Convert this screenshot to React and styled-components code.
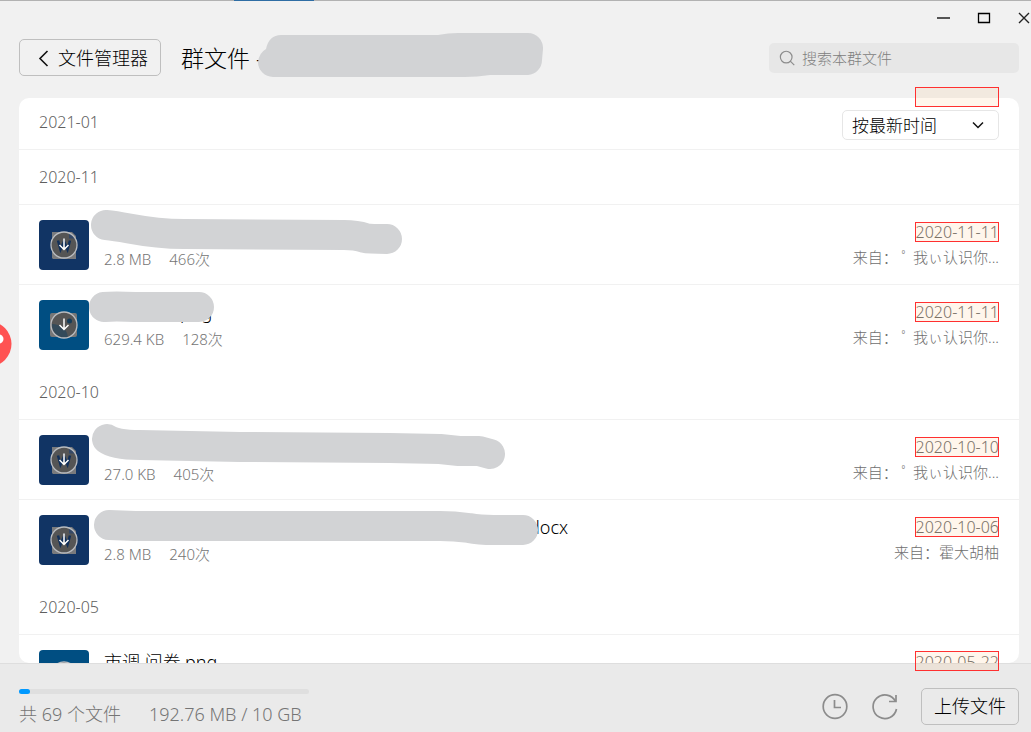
import React from "react";
import styled, { createGlobalStyle } from "styled-components";
import { useState } from "react";

const GlobalStyle = createGlobalStyle`
  * {
    box-sizing: border-box;
  }

  body {
    margin: 0;
    background: #f1f1f1;
    overflow: hidden;
  }

  body, button, input, select {
    font-family: "Noto Sans", "Noto Sans CJK SC", sans-serif;
    font-weight: 300;
  }

  h1, h2, p, ul {
    margin: 0;
    padding: 0;
    font-weight: inherit;
    list-style: none;
  }
`;

const Whole = styled.main`
  height: 100vh;
  position: relative;
  overflow: hidden;

  display: flex;
  flex-direction: column;

  background: #f1f1f1;
`;

const TopEdge = styled.div`
  height: 1px;
  padding-left: 234px;
  flex-shrink: 0;
  background: #b2b2b2;
`;

const TabAccent = styled.div`
  width: 80px;
  height: 1px;
  background: #2e6da4;
`;

const TitleBar = styled.div`
  height: 34px;
  margin-right: -3px;
  flex-shrink: 0;

  display: flex;
  justify-content: flex-end;
  gap: 20px;
`;

const WindowButton = styled.button`
  width: 20px;
  padding: 0;
  border: 0;
  background: none;
  flex-shrink: 0;

  display: flex;
  align-items: center;
  justify-content: center;

  cursor: pointer;
`;

const Header = styled.header`
  padding: 4px 12px 22px 19px;
  flex-shrink: 0;

  display: flex;
  align-items: center;
  gap: 20px;
`;

const OutlineButton = styled.button`
  height: 37px;
  padding: ${(props) => props.$pad || "0 13px"};
  border: 1px solid #bfbfbf;
  border-radius: 5px;
  background: transparent;
  flex-shrink: 0;

  display: flex;
  align-items: center;
  gap: 7px;

  color: #000;
  font-size: 18px;
  line-height: 24px;
  white-space: nowrap;
  cursor: pointer;
`;

const Title = styled.h1`
  flex: 1;
  position: relative;

  color: #000;
  font-size: 23px;
  line-height: 36px;
  white-space: nowrap;
`;

const Smear = styled.svg`
  position: absolute;
  top: 0;
  left: 0;
  overflow: visible;
  pointer-events: none;

  fill: ${(props) => (props.$solid ? "#d2d3d5" : "none")};
  stroke: ${(props) => (props.$solid ? "none" : "#d2d3d5")};
  stroke-width: 30px;
  stroke-linecap: round;
  stroke-linejoin: round;
`;

const SearchBox = styled.label`
  width: 250px;
  height: 30px;
  padding: 0 10px;
  border-radius: 5px;
  background: #e7e7e7;

  display: flex;
  align-items: center;
  gap: 5px;
`;

const SearchInput = styled.input`
  width: 100%;
  min-width: 0;
  padding: 0;
  border: 0;
  outline: 0;
  background: transparent;

  color: #333;
  font-size: 15px;
  line-height: 24px;

  &::placeholder {
    color: #808080;
    opacity: 1;
  }
`;

const PanelWrap = styled.div`
  min-height: 0;
  margin: 0 12px 0 19px;
  flex: 1;
  position: relative;
  z-index: 1;
`;

const Panel = styled.section`
  height: 100%;
  overflow: hidden;
  border-radius: 10px;
  background: #fff;
`;

const Groups = styled.div`
  margin-top: -3px;
`;

const GroupTitle = styled.h2`
  height: 55px;
  padding: 0 20px;
  border-bottom: 1px solid #f1f1f1;

  display: flex;
  align-items: center;

  color: #5f5f5f;
  font-size: 16px;
  line-height: 24px;
`;

const SortSelect = styled.select`
  width: 157px;
  height: 30px;
  padding: 0 9px;
  border: 1px solid #e6e6e6;
  border-radius: 5px;
  outline: 0;
  appearance: none;
  background: #fff;

  color: #000;
  font-size: 17px;
`;

const SortBox = styled.div`
  position: absolute;
  top: 12px;
  right: 20px;

  & svg {
    position: absolute;
    top: 11px;
    right: 15px;
    pointer-events: none;
  }
`;

const Mark = styled.span`
  height: 20px;
  width: 84px;

  position: absolute;
  top: ${(props) => props.$top};
  bottom: ${(props) => props.$bottom};
  right: ${(props) => props.$right || "0"};

  border: 1px solid #ff3030;
  background: rgba(255, 160, 40, 0.09);
  pointer-events: none;
`;

const Row = styled.li`
  height: 80px;
  padding: 15px 20px 14px;
  position: relative;

  display: flex;
  gap: 15px;

  &:not(:last-child) {
    border-bottom: 1px solid #f1f1f1;
  }
`;

const Thumb = styled.button`
  width: 50px;
  height: 50px;
  padding: 0;
  border: 0;
  border-radius: 4px;
  flex-shrink: 0;
  background: ${(props) => (props.$kind === "png" ? "#004e82" : "#113464")};
  cursor: pointer;

  & svg {
    display: block;
  }
`;

const Info = styled.div`
  min-width: 0;
  flex: 1;
`;

const FileName = styled.p`
  height: 24px;
  padding-left: ${(props) => props.$covered || 0}px;

  color: #000;
  font-size: 18px;
  line-height: 24px;
  white-space: nowrap;
`;

const Meta = styled.p`
  margin-top: 3px;

  display: flex;
  gap: 18px;

  color: #757575;
  font-size: 15px;
  line-height: 24px;
`;

const Side = styled.div`
  display: flex;
  flex-direction: column;
  align-items: flex-end;

  color: #6e6e6e;
  font-size: 15px;
  line-height: 24px;
  white-space: pre;
`;

const DateText = styled.time`
  height: 25px;
  position: relative;
  font-size: 16px;
`;

const Footer = styled.footer`
  height: 69px;
  padding: 0 12px 0 19px;
  border-top: 1px solid #dedede;
  flex-shrink: 0;
  background: #eaeaea;

  display: flex;
  align-items: center;
  justify-content: space-between;
`;

const Usage = styled.div`
  padding-top: 20px;
`;

const Track = styled.div`
  width: 290px;
  height: 5px;
  margin-bottom: 6px;
  border-radius: 3px;
  background: #dfdfdf;
`;

const Filled = styled.div`
  height: 100%;
  min-width: 11px;
  border-radius: 3px;
  background: #0099ff;
`;

const UsageText = styled.p`
  display: flex;
  gap: 28px;

  color: #757575;
  font-size: 18px;
  line-height: 28px;
  white-space: nowrap;
`;

const Actions = styled.div`
  padding-top: 18px;
  margin-bottom: 2px;

  display: flex;
  align-items: center;
  gap: 22px;
`;

const IconButton = styled.button`
  width: 28px;
  height: 28px;
  padding: 0;
  border: 0;
  background: none;
  cursor: pointer;

  & svg {
    display: block;
  }
`;

const FloatingBadge = styled.button`
  width: 46px;
  height: 46px;
  padding: 0;
  border: 0;
  background: none;

  position: absolute;
  top: 321px;
  left: -34px;
  z-index: 2;
`;

const ThumbArt = ({ kind }) => (
  <svg width="50" height="50" viewBox="0 0 50 50" fill="none">
    {kind === "png" ? (
      <>
        <rect x="11" y="13" width="27" height="24" rx="2" fill="#777" />
        <circle cx="25" cy="25" r="13" fill="#555" />
        <path d="M13 24c8 0 15 5 16 13a12.500 12.500 0 0 1-16-13z" fill="#334a5a" />
        <circle cx="30.500" cy="21" r="2.500" fill="#153b58" />
      </>
    ) : (
      <>
        <path d="M13 12h20l4 4v23H14l-1-1z" fill="#7a7b7d" />
        <circle cx="25" cy="25" r="13" fill="#555" />
        <path d="M30 13.500c3 1 5 3 6 5h-6z" fill="#344866" />
        <path d="M19 20.500l2.500 9 3.500-8 3.500 8 2.500-9" stroke="#12305a" strokeWidth="2.500" />
      </>
    )}
    <circle cx="25" cy="25" r="13" stroke="#b9bcc0" strokeWidth="1.300" />
    <path d="M25 18.500v11M20.500 25l4.500 4.500 4.500-4.500" stroke="#fff" strokeWidth="1.500" />
  </svg>
);

// smear paths are drawn from the row's top left corner
const groups = [
  { month: "2021-01", files: [] },
  {
    month: "2020-11",
    files: [
      {
        kind: "doc",
        size: "2.8 MB",
        count: "466次",
        date: "2020-11-11",
        from: "来自： ﾟ 我ぃ认识你...",
        smear: "M87 20C110 22 125 29 165 29L325 30Q337 30 346 33Q350 34 368 34",
      },
      {
        kind: "png",
        name: "png",
        covered: 76,
        size: "629.4 KB",
        count: "128次",
        date: "2020-11-11",
        from: "来自： ﾟ 我ぃ认识你...",
        smear: "M85 22Q95 21 116 22L180 22",
      },
    ],
  },
  {
    month: "2020-10",
    files: [
      {
        kind: "doc",
        size: "27.0 KB",
        count: "405次",
        date: "2020-10-10",
        from: "来自： ﾟ 我ぃ认识你...",
        smear: "M88 19Q96 25 121 25L221 27L371 28L421 29L440 31L460 31L471 34",
      },
      {
        kind: "doc",
        name: "docx",
        covered: 425,
        size: "2.8 MB",
        count: "240次",
        date: "2020-10-06",
        from: "来自：霍大胡柚",
        smear: "M90 25L116 26L421 26Q435 26 450 28Q460 30 475 30L504 30",
      },
    ],
  },
  {
    month: "2020-05",
    files: [{ kind: "png", name: "市调 问卷.png", date: "2020-05-22", last: true }],
  },
];

const FileRow = ({ file }) => (
  <Row>
    <Thumb $kind={file.kind} aria-label="下载">
      <ThumbArt kind={file.kind} />
    </Thumb>
    <Info>
      <FileName $covered={file.covered}>{file.name}</FileName>
      {file.size && (
        <Meta>
          <span>{file.size}</span>
          <span>{file.count}</span>
        </Meta>
      )}
    </Info>
    <Side>
      <DateText>
        {file.date}
        {!file.last && <Mark $top="2px" />}
      </DateText>
      {file.from && <span>{file.from}</span>}
    </Side>
    {file.smear && (
      <Smear width="1" height="1">
        <path d={file.smear} />
      </Smear>
    )}
  </Row>
);

const App = () => {
  const [keyword, setKeyword] = useState("");
  const [sort, setSort] = useState("time");

  return (
    <>
      <GlobalStyle />
      <Whole>
        <TopEdge>
          <TabAccent />
        </TopEdge>
        <TitleBar>
          <WindowButton aria-label="最小化">
            <svg width="14" height="12" viewBox="0 0 14 12">
              <path d="M0 6h13" stroke="#555" strokeWidth="2" />
            </svg>
          </WindowButton>
          <WindowButton aria-label="最大化">
            <svg width="14" height="12" viewBox="0 0 14 12">
              <path d="M1.500 1.500h11v9h-11z" fill="none" stroke="#000" strokeWidth="1.300" />
            </svg>
          </WindowButton>
          <WindowButton aria-label="关闭">
            <svg width="12" height="12" viewBox="0 0 12 12">
              <path d="M1 1l10 10M11 1L1 11" stroke="#222" strokeWidth="1.400" />
            </svg>
          </WindowButton>
        </TitleBar>

        <Header>
          <OutlineButton $pad="0 12px 0 18px">
            <svg width="13" height="18" viewBox="0 0 13 18">
              <path d="M9.500 2L2 9.500l7.500 7.500" fill="none" stroke="#111" strokeWidth="1.600" />
            </svg>
            文件管理器
          </OutlineButton>
          <Title>
            群文件 -
            <Smear $solid width="1" height="1">
              <path d="M85 9Q88 -5 100 -5H257Q267 -7 277 -7H347A15 15 0 0 1 362 9L361 20A15 15 0 0 1 347 35H309Q296 37 284 37H92A15 15 0 0 1 77 22Q78 13 85 9" />
            </Smear>
          </Title>
          <SearchBox>
            <svg width="20" height="20" viewBox="0 0 20 20" fill="none" stroke="#8c8c8c">
              <circle cx="8" cy="9" r="6.500" strokeWidth="1.300" />
              <path d="M12.500 13.500L17 18" strokeWidth="1.300" />
            </svg>
            <SearchInput
              aria-label="搜索本群文件"
              placeholder="搜索本群文件"
              value={keyword}
              onChange={(e) => setKeyword(e.target.value)}
            />
          </SearchBox>
        </Header>

        <PanelWrap>
          <Panel>
            <Groups>
              {groups.map((group) => (
                <section key={group.month}>
                  <GroupTitle>{group.month}</GroupTitle>
                  <ul>
                    {group.files.map((file, index) => (
                      <FileRow key={index} file={file} />
                    ))}
                  </ul>
                </section>
              ))}
            </Groups>
          </Panel>
          <SortBox>
            <SortSelect
              aria-label="排序"
              value={sort}
              onChange={(e) => setSort(e.target.value)}
            >
              <option value="time">按最新时间</option>
            </SortSelect>
            <svg width="12" height="8" viewBox="0 0 12 8">
              <path d="M1 1.500l5 5 5-5" fill="none" stroke="#111" strokeWidth="1.500" />
            </svg>
          </SortBox>
          <Mark $top="-11px" $right="20px" />
          <Mark $bottom="-8px" $right="20px" />
        </PanelWrap>

        <Footer>
          <Usage>
            <Track role="progressbar" aria-label="已用空间" aria-valuenow={2}>
              <Filled style={{ width: `${(192.76 / 10240) * 100}%` }} />
            </Track>
            <UsageText>
              <span>共 69 个文件</span>
              <span>192.76 MB / 10 GB</span>
            </UsageText>
          </Usage>
          <Actions>
            <IconButton aria-label="历史记录">
              <svg width="28" height="28" viewBox="0 0 28 28" fill="none" stroke="#8c8c8c" strokeWidth="1.700">
                <circle cx="14" cy="14.500" r="11.800" />
                <path d="M13.500 8v7.500h6.500" />
              </svg>
            </IconButton>
            <IconButton aria-label="刷新">
              <svg width="28" height="28" viewBox="0 0 28 28" fill="none" stroke="#8c8c8c" strokeWidth="1.700">
                <path d="M25.500 17A11.800 11.800 0 1 1 24.500 9.500" />
                <path d="M25 3v6.500h-7" />
              </svg>
            </IconButton>
            <OutlineButton $pad="0 12px">上传文件</OutlineButton>
          </Actions>
        </Footer>

        <FloatingBadge aria-label="消息">
          <svg width="46" height="46" viewBox="0 0 46 46">
            <circle cx="23" cy="23" r="22.500" fill="#ff5252" />
            <circle cx="33" cy="18" r="4.500" fill="#fff" />
          </svg>
        </FloatingBadge>
      </Whole>
    </>
  );
};

export default App;
